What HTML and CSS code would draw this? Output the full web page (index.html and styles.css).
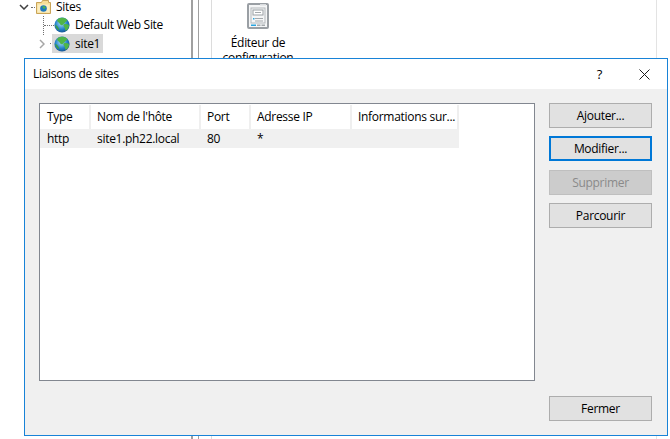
FILE: index.html
```html
<!DOCTYPE html>
<html lang="fr">
<head>
<meta charset="utf-8">
<title>Liaisons de sites</title>
<link rel="stylesheet" href="styles.css">
</head>
<body>
<svg class="defs" width="0" height="0" aria-hidden="true">
  <defs>
    <radialGradient id="sea" cx="0.45" cy="0.4" r="0.7">
      <stop offset="0" stop-color="#a9dcf5"/>
      <stop offset="0.55" stop-color="#2484c9"/>
      <stop offset="1" stop-color="#103f7c"/>
    </radialGradient>
    <symbol id="globe" viewBox="0 0 16 16">
      <circle cx="8" cy="8" r="7.600" fill="url(#sea)"/>
      <path d="M4.500 1.500C7 .3 11 .5 13 2.500c.7 1.200-.5 2.300-1.800 2.500-.3 1.500-1.500 1.800-2.400 2.700-1 1-2.600.4-3-.9C5.500 5.500 3.500 5 3 3.500c.2-.8.800-1.500 1.500-2Z" fill="#4fb548"/>
      <path d="M9.500 7.500c1.500-.8 3.800-.6 5.500.4.200 2.200-1 4.600-3 5.800-1-.4-1.100-1.700-1.200-2.600-.2-1.200-1.800-1.900-1.300-3.600Z" fill="#4fb548"/>
      <path d="M1.200 8c1.200.2 2.400 1 3 2.300.4.900 1.100 1.500.9 3C3 12.500 1.400 10.500 1.200 8Z" fill="#3b9f4a"/>
    </symbol>
  </defs>
</svg>

<div class="app">
  <aside class="tree">
    <div class="node node-sites">
      <svg class="chev" width="10" height="6" viewBox="0 0 10 6"><path d="M1 1l4 4 4-4" fill="none" stroke="#404040" stroke-width="1.500"/></svg>
      <span class="dash dash-short"></span>
      <svg class="folder" width="15" height="14" viewBox="0 0 15 14">
        <path d="M.5 2.500h5l1-2h6v2h2v11h-14Z" fill="#f6dd97" stroke="#c9a458"/>
        <path d="M1.500 4.500h12v8h-12Z" fill="#fbedc0"/>
        <circle cx="7.500" cy="8.500" r="3.300" fill="#1f77bd"/>
        <path d="M6 6.800l2.500-.9 1.300 1.600-1.800 1.700Z" fill="#4fb548"/>
      </svg>
      <span class="label">Sites</span>
    </div>
    <div class="node node-child">
      <span class="vline"></span>
      <span class="dash dash-long"></span>
      <svg class="globe" width="16" height="16"><use href="#globe"/></svg>
      <span class="label label-child">Default Web Site</span>
    </div>
    <div class="node node-child">
      <svg class="chev-right" width="6" height="10" viewBox="0 0 6 10"><path d="M1 1l4 4-4 4" fill="none" stroke="#a6a6a6" stroke-width="1.500"/></svg>
      <span class="dash dash-tiny"></span>
      <span class="selected">
        <svg class="globe" width="16" height="16"><use href="#globe"/></svg>
        <span class="label">site1</span>
      </span>
    </div>
  </aside>
  <div class="rail"></div>
  <main class="features">
    <div class="feature">
      <svg width="22" height="26" viewBox="0 0 22 26">
        <rect x="1" y="1" width="20" height="24" rx="1" fill="#f5f6f7" stroke="#9a9fa4" stroke-width="2"/>
        <rect x="13" y="1" width="6" height="1.500" fill="#d9dcdf"/>
        <rect x="4" y="5" width="14" height="15" fill="#f5f6f7" stroke="#b4b8bc"/>
        <rect x="6" y="7" width="10" height="5" fill="#fff" stroke="#9a9fa4"/>
        <path d="M8 9.500h6M8 15.500h8M8 18h8" stroke="#a4a9ad"/>
        <rect x="6" y="15" width="1.500" height="1.500" fill="#2aa5e0"/>
        <rect x="4" y="21.500" width="5" height="1.500" fill="#2aa5e0"/>
        <rect x="10" y="21.500" width="3.500" height="1.500" fill="#a4a9ad"/>
        <rect x="14.500" y="21.500" width="3.500" height="1.500" fill="#a4a9ad"/>
      </svg>
      <span class="feature-name">Éditeur de configuration</span>
    </div>
  </main>
</div>

<section class="dialog" role="dialog" aria-label="Liaisons de sites">
  <header class="titlebar">
    <span class="title">Liaisons de sites</span>
    <span class="help">?</span>
    <svg class="close" width="11" height="11" viewBox="0 0 11 11"><path d="M.5.500l10 10M10.500.500l-10 10" stroke="#1a1a1a" fill="none"/></svg>
  </header>
  <div class="body">
    <div class="list">
      <div class="row head">
        <span class="cell c-type">Type</span>
        <span class="cell c-host">Nom de l'hôte</span>
        <span class="cell c-port">Port</span>
        <span class="cell c-ip">Adresse IP</span>
        <span class="cell c-info">Informations sur...</span>
      </div>
      <div class="row item">
        <span class="cell c-type">http</span>
        <span class="cell c-host">site1.ph22.local</span>
        <span class="cell c-port">80</span>
        <span class="cell c-ip">*</span>
        <span class="cell c-info"></span>
      </div>
    </div>
    <div class="actions">
      <button class="btn">Ajouter...</button>
      <button class="btn btn-focus">Modifier...</button>
      <button class="btn btn-off" disabled>Supprimer</button>
      <button class="btn">Parcourir</button>
      <button class="btn btn-close">Fermer</button>
    </div>
  </div>
</section>
</body>
</html>
```
FILE: styles.css
```css
* { box-sizing: border-box; }
html, body { margin: 0; height: 100%; }
body {
  position: relative;
  width: 670px;
  height: 439px;
  overflow: hidden;
  background: #fff;
  color: #000;
  font: 12px/16px "Open Sans", "Noto Sans", sans-serif;
  letter-spacing: -.3px;
}
.defs { position: absolute; }
.app { display: flex; height: 439px; }

.tree { width: 193px; flex: none; border-right: 2px solid #a0a0a0; padding: 0 0 0 19px; }
.node { display: flex; align-items: center; position: relative; }
.node-sites { height: 14px; margin-bottom: 2px; line-height: 14px; }
.node-child { padding-left: 18px; height: 18.500px; }
.chev { flex: none; }
.chev-right { flex: none; margin-left: 2px; }
.dash { flex: none; height: 0; border-top: 1px dotted #707070; }
.dash-short { width: 4px; margin: 0 1px 0 2px; }
.dash-long { position: absolute; left: 25px; width: 10px; }
.dash-tiny { width: 3px; margin-left: 5px; margin-right: -1px; }
.vline { position: absolute; left: 24px; top: 0; height: 19px; border-left: 1px dotted #707070; }
.folder { flex: none; margin-right: 5px; }
.globe { flex: none; }
.node-child > .globe { margin-left: 17px; }
.label { white-space: nowrap; }
.label-child { margin-left: 5px; }
.selected { display: flex; align-items: center; gap: 5px; height: 19px; width: 51px; padding-left: 2px; background: #d9d9d9; }

.rail { width: 14px; flex: none; margin-left: 5px; border-left: 1px solid #a0a0a0; border-right: 1px solid #dcdcdc; }
.features { flex: 1; border-right: 1px solid #e3e3e3; margin-right: 13px; }
.feature { width: 92px; padding-top: 3px; display: flex; flex-direction: column; align-items: center; }
.feature-name { width: 80px; text-align: center; margin-top: 6px; line-height: 15px; }

.dialog {
  position: absolute;
  left: 24px;
  top: 58px;
  width: 644px;
  height: 378px;
  border: 1px solid #1883d7;
  background: #f0f0f0;
  display: flex;
  flex-direction: column;
}
.titlebar { height: 30px; flex: none; background: #fff; display: flex; align-items: center; padding-left: 8px; }
.title { flex: 1; }
.help { margin-right: 37px; font-size: 13px; }
.close { margin-right: 17px; }
.body { flex: 1; display: flex; padding: 14px 15px 14px 14px; gap: 14px; }

.list { width: 496px; height: 278px; background: #fff; border: 1px solid #828790; padding: 1px 0 0; flex: none; }
.row { display: flex; width: 419px; }
.head { height: 24px; align-items: center; }
.head .cell { height: 24px; border-right: 2px solid #efefef; line-height: 24px; }
.item { height: 19px; background: #f0f0f0; align-items: center; }
.cell { display: block; padding-left: 6px; white-space: nowrap; flex: none; }
.c-type { width: 51px; padding-left: 7px; }
.c-host { width: 110px; }
.c-port { width: 50px; }
.c-ip { width: 101px; }
.c-info { width: 107px; }

.actions { flex: 1; display: flex; flex-direction: column; gap: 8px; }
.btn {
  width: 103px;
  height: 25px;
  padding: 0;
  background: #e1e1e1;
  border: 1px solid #adadad;
  color: #000;
  font: inherit;
  letter-spacing: inherit;
}
.btn-focus { border: 2px solid #0078d7; }
.btn-off { margin-top: 1px; background: #cccccc; border-color: #bfbfbf; color: #8a8a8a; }
.btn-close { margin-top: auto; }
```
